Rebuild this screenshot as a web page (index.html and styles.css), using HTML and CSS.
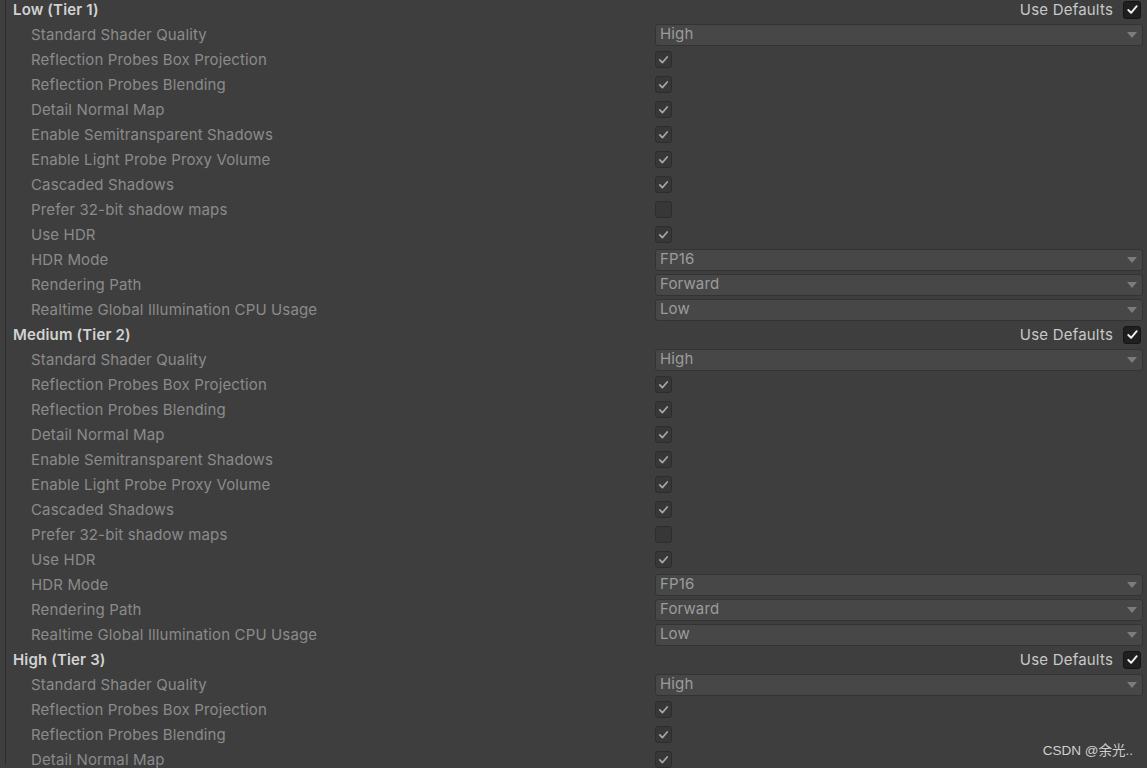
FILE: index.html
```html
<!DOCTYPE html>
<html>
<head>
<meta charset="utf-8">
<link rel="stylesheet" href="styles.css">
</head>
<body>
<div class="panel">
  <div class="list">
    <div class="header"><span class="tier">Low (Tier 1)</span><span class="defaults">Use Defaults<span class="dbox"><svg viewBox="0 0 16 16"><path d="M3.5 8.5l3 3 6-7" /></svg></span></span></div>
    <div class="row"><span class="label">Standard Shader Quality</span><span class="value"><span class="drop">High<i class="arrow"></i></span></span></div>
    <div class="row"><span class="label">Reflection Probes Box Projection</span><span class="value"><span class="box on"><svg viewBox="0 0 16 16"><path d="M4 8.5l2.8 2.8 5.2-6" /></svg></span></span></div>
    <div class="row"><span class="label">Reflection Probes Blending</span><span class="value"><span class="box on"><svg viewBox="0 0 16 16"><path d="M4 8.5l2.8 2.8 5.2-6" /></svg></span></span></div>
    <div class="row"><span class="label">Detail Normal Map</span><span class="value"><span class="box on"><svg viewBox="0 0 16 16"><path d="M4 8.5l2.8 2.8 5.2-6" /></svg></span></span></div>
    <div class="row"><span class="label">Enable Semitransparent Shadows</span><span class="value"><span class="box on"><svg viewBox="0 0 16 16"><path d="M4 8.5l2.8 2.8 5.2-6" /></svg></span></span></div>
    <div class="row"><span class="label">Enable Light Probe Proxy Volume</span><span class="value"><span class="box on"><svg viewBox="0 0 16 16"><path d="M4 8.5l2.8 2.8 5.2-6" /></svg></span></span></div>
    <div class="row"><span class="label">Cascaded Shadows</span><span class="value"><span class="box on"><svg viewBox="0 0 16 16"><path d="M4 8.5l2.8 2.8 5.2-6" /></svg></span></span></div>
    <div class="row"><span class="label">Prefer 32-bit shadow maps</span><span class="value"><span class="box"></span></span></div>
    <div class="row"><span class="label">Use HDR</span><span class="value"><span class="box on"><svg viewBox="0 0 16 16"><path d="M4 8.5l2.8 2.8 5.2-6" /></svg></span></span></div>
    <div class="row"><span class="label">HDR Mode</span><span class="value"><span class="drop">FP16<i class="arrow"></i></span></span></div>
    <div class="row"><span class="label">Rendering Path</span><span class="value"><span class="drop">Forward<i class="arrow"></i></span></span></div>
    <div class="row"><span class="label">Realtime Global Illumination CPU Usage</span><span class="value"><span class="drop">Low<i class="arrow"></i></span></span></div>

    <div class="header"><span class="tier">Medium (Tier 2)</span><span class="defaults">Use Defaults<span class="dbox"><svg viewBox="0 0 16 16"><path d="M3.5 8.5l3 3 6-7" /></svg></span></span></div>
    <div class="row"><span class="label">Standard Shader Quality</span><span class="value"><span class="drop">High<i class="arrow"></i></span></span></div>
    <div class="row"><span class="label">Reflection Probes Box Projection</span><span class="value"><span class="box on"><svg viewBox="0 0 16 16"><path d="M4 8.5l2.8 2.8 5.2-6" /></svg></span></span></div>
    <div class="row"><span class="label">Reflection Probes Blending</span><span class="value"><span class="box on"><svg viewBox="0 0 16 16"><path d="M4 8.5l2.8 2.8 5.2-6" /></svg></span></span></div>
    <div class="row"><span class="label">Detail Normal Map</span><span class="value"><span class="box on"><svg viewBox="0 0 16 16"><path d="M4 8.5l2.8 2.8 5.2-6" /></svg></span></span></div>
    <div class="row"><span class="label">Enable Semitransparent Shadows</span><span class="value"><span class="box on"><svg viewBox="0 0 16 16"><path d="M4 8.5l2.8 2.8 5.2-6" /></svg></span></span></div>
    <div class="row"><span class="label">Enable Light Probe Proxy Volume</span><span class="value"><span class="box on"><svg viewBox="0 0 16 16"><path d="M4 8.5l2.8 2.8 5.2-6" /></svg></span></span></div>
    <div class="row"><span class="label">Cascaded Shadows</span><span class="value"><span class="box on"><svg viewBox="0 0 16 16"><path d="M4 8.5l2.8 2.8 5.2-6" /></svg></span></span></div>
    <div class="row"><span class="label">Prefer 32-bit shadow maps</span><span class="value"><span class="box"></span></span></div>
    <div class="row"><span class="label">Use HDR</span><span class="value"><span class="box on"><svg viewBox="0 0 16 16"><path d="M4 8.5l2.8 2.8 5.2-6" /></svg></span></span></div>
    <div class="row"><span class="label">HDR Mode</span><span class="value"><span class="drop">FP16<i class="arrow"></i></span></span></div>
    <div class="row"><span class="label">Rendering Path</span><span class="value"><span class="drop">Forward<i class="arrow"></i></span></span></div>
    <div class="row"><span class="label">Realtime Global Illumination CPU Usage</span><span class="value"><span class="drop">Low<i class="arrow"></i></span></span></div>

    <div class="header"><span class="tier">High (Tier 3)</span><span class="defaults">Use Defaults<span class="dbox"><svg viewBox="0 0 16 16"><path d="M3.5 8.5l3 3 6-7" /></svg></span></span></div>
    <div class="row"><span class="label">Standard Shader Quality</span><span class="value"><span class="drop">High<i class="arrow"></i></span></span></div>
    <div class="row"><span class="label">Reflection Probes Box Projection</span><span class="value"><span class="box on"><svg viewBox="0 0 16 16"><path d="M4 8.5l2.8 2.8 5.2-6" /></svg></span></span></div>
    <div class="row"><span class="label">Reflection Probes Blending</span><span class="value"><span class="box on"><svg viewBox="0 0 16 16"><path d="M4 8.5l2.8 2.8 5.2-6" /></svg></span></span></div>
    <div class="row"><span class="label">Detail Normal Map</span><span class="value"><span class="box on"><svg viewBox="0 0 16 16"><path d="M4 8.5l2.8 2.8 5.2-6" /></svg></span></span></div>
  </div>
</div>
<div class="watermark">CSDN @余光..</div>
</body>
</html>
```

FILE: styles.css
```css
html, body {
  margin: 0;
  padding: 0;
  background: #3e3e3e;
  height: 768px;
  overflow: hidden;
}
body {
  font-family: Inter, "Noto Sans", "Noto Sans CJK SC", sans-serif;
  font-size: 15px;
  letter-spacing: 0.14px;
  position: relative;
}
.panel {
  margin-left: 5px;
  border-left: 1px solid #2c2c2c;
  height: 768px;
}
.list {
  margin-top: -3px;
  display: flex;
  flex-direction: column;
}
.header, .row {
  height: 25px;
  display: flex;
  align-items: center;
}
.header {
  justify-content: space-between;
  padding-left: 7px;
  padding-right: 6px;
}
.tier {
  font-weight: 600;
  color: #d2d2d2;
  letter-spacing: 0.15px;
}
.defaults {
  display: flex;
  align-items: center;
  gap: 10px;
  color: #c8c8c8;
  letter-spacing: 0.2px;
}
.dbox {
  width: 18px;
  height: 18px;
  box-sizing: border-box;
  background: #1f1f1f;
  border: 1px solid #151515;
  border-radius: 3px;
  display: flex;
  align-items: center;
  justify-content: center;
}
.dbox svg {
  width: 15px;
  height: 15px;
  fill: none;
  stroke: #f2f2f2;
  stroke-width: 2;
  stroke-linecap: round;
  stroke-linejoin: round;
}
.row {
  display: grid;
  grid-template-columns: 649px 1fr;
  align-items: center;
  padding-right: 4px;
}
.label {
  padding-left: 25px;
  color: #8b8b8b;
  white-space: nowrap;
}
.value {
  display: flex;
  align-items: center;
}
.drop {
  flex: 1;
  height: 22px;
  box-sizing: border-box;
  background: #474747;
  border: 1px solid #333333;
  border-radius: 3px;
  color: #9c9c9c;
  padding: 0 5px 2px 4px;
  display: flex;
  align-items: center;
  justify-content: space-between;
  line-height: 1;
}
.arrow {
  width: 0;
  height: 0;
  border-left: 5px solid transparent;
  border-right: 5px solid transparent;
  border-top: 6px solid #7c7c7c;
  margin-top: 3px;
}
.box {
  width: 17px;
  height: 17px;
  box-sizing: border-box;
  background: #373737;
  border: 1px solid #2d2d2d;
  border-radius: 3px;
  display: flex;
}
.box svg {
  width: 15px;
  height: 15px;
  fill: none;
  stroke: #a6a6a6;
  stroke-width: 1.8;
  stroke-linecap: round;
  stroke-linejoin: round;
}
.watermark {
  position: absolute;
  right: 14px;
  bottom: 9px;
  font-family: "Liberation Sans", "Noto Sans CJK SC", sans-serif;
  font-size: 13.5px;
  letter-spacing: 0;
  color: #cfcfcf;
}
```
